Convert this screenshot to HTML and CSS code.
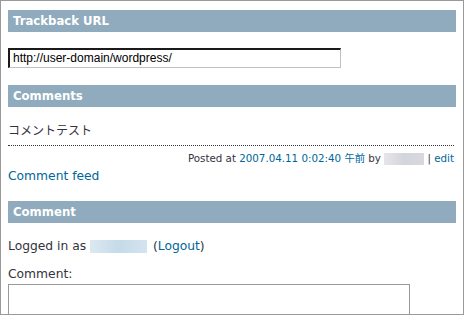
FILE: index.html
```html
<!DOCTYPE html>
<html lang="ja">
<head>
    <meta charset="UTF-8">
    <title>Comments</title>
    <link rel="stylesheet" href="styles.css">
</head>
<body>
    <div class="frame">
        <h2 class="bar">Trackback URL</h2>
        <div class="trackback">
            <input type="text" class="tb-input" value="http://user-domain/wordpress/" readonly>
        </div>

        <h2 class="bar">Comments</h2>
        <div class="comment-item">
            <p class="comment-text">コメントテスト</p>
            <p class="comment-meta">Posted at <a href="#">2007.04.11 0:02:40 午前</a> by <span class="blur blur-gray"></span> | <a href="#">edit</a></p>
        </div>
        <p class="feed"><a href="#">Comment feed</a></p>

        <h2 class="bar">Comment</h2>
        <form class="comment-form">
            <p class="logged">Logged in as <span class="blur blur-blue"></span> (<a href="#">Logout</a>)</p>
            <label for="comment">Comment:</label>
            <textarea id="comment"></textarea>
        </form>
    </div>
</body>
</html>
```

FILE: styles.css
```css
html, body {
    margin: 0;
    padding: 0;
    background: #ffffff;
}

body {
    font-family: "DejaVu Sans", Verdana, "Noto Sans CJK JP", sans-serif;
    color: #333340;
}

a {
    color: #006699;
    text-decoration: none;
}

.frame {
    box-sizing: border-box;
    width: 464px;
    height: 315px;
    border: 1px solid #999999;
    padding: 9px 7px 0 7px;
    overflow: hidden;
}

.bar {
    background-color: #8fabbd;
    color: #ffffff;
    font-size: 11.7px;
    font-weight: bold;
    height: 22px;
    line-height: 22px;
    margin: 0;
    padding: 0 5px;
}

.trackback {
    padding: 15px 0 17px 0;
}

.tb-input {
    box-sizing: border-box;
    width: 333px;
    height: 20px;
    margin: 0;
    padding: 0 3px;
    border-style: solid;
    border-width: 2px 1px 1px 2px;
    border-color: #1a1a1a #c0c0c0 #c0c0c0 #1a1a1a;
    font-family: "Liberation Sans", Arial, sans-serif;
    font-size: 12px;
    color: #000000;
    background: #ffffff;
    outline: none;
}

.comment-item {
    padding-top: 16px;
}

.comment-text {
    margin: 0 2px 0 0;
    font-size: 12px;
    line-height: 14px;
    padding-bottom: 8px;
    border-bottom: 1px dotted #333340;
    font-family: "Noto Sans CJK JP", sans-serif;
}

.comment-meta {
    margin: 0 2px 0 0;
    padding-top: 6px;
    font-size: 10.3px;
    line-height: 12px;
    text-align: right;
}

.blur {
    display: inline-block;
    vertical-align: middle;
}

.blur-gray {
    width: 40px;
    height: 12px;
    background: linear-gradient(to right, #e6e6ea, #d4d4dc 50%, #d8d8de);
}

.feed {
    margin: 0;
    padding: 3px 0 17px 0;
    font-size: 12.3px;
    line-height: 16px;
}

.comment-form {
    padding-top: 15px;
}

.logged {
    margin: 0;
    font-size: 12.3px;
    line-height: 16px;
}

.blur-blue {
    width: 57px;
    height: 13px;
    margin-right: 2px;
    background: linear-gradient(to right, #dde9f1, #c4dbe8 50%, #d4e4ee);
}

.comment-form label {
    display: block;
    margin-top: 12px;
    font-size: 12.3px;
    line-height: 16px;
}

.comment-form textarea {
    display: block;
    box-sizing: border-box;
    width: 402px;
    height: 60px;
    margin-top: 2px;
    border: 1px solid #999999;
    resize: none;
}
```
